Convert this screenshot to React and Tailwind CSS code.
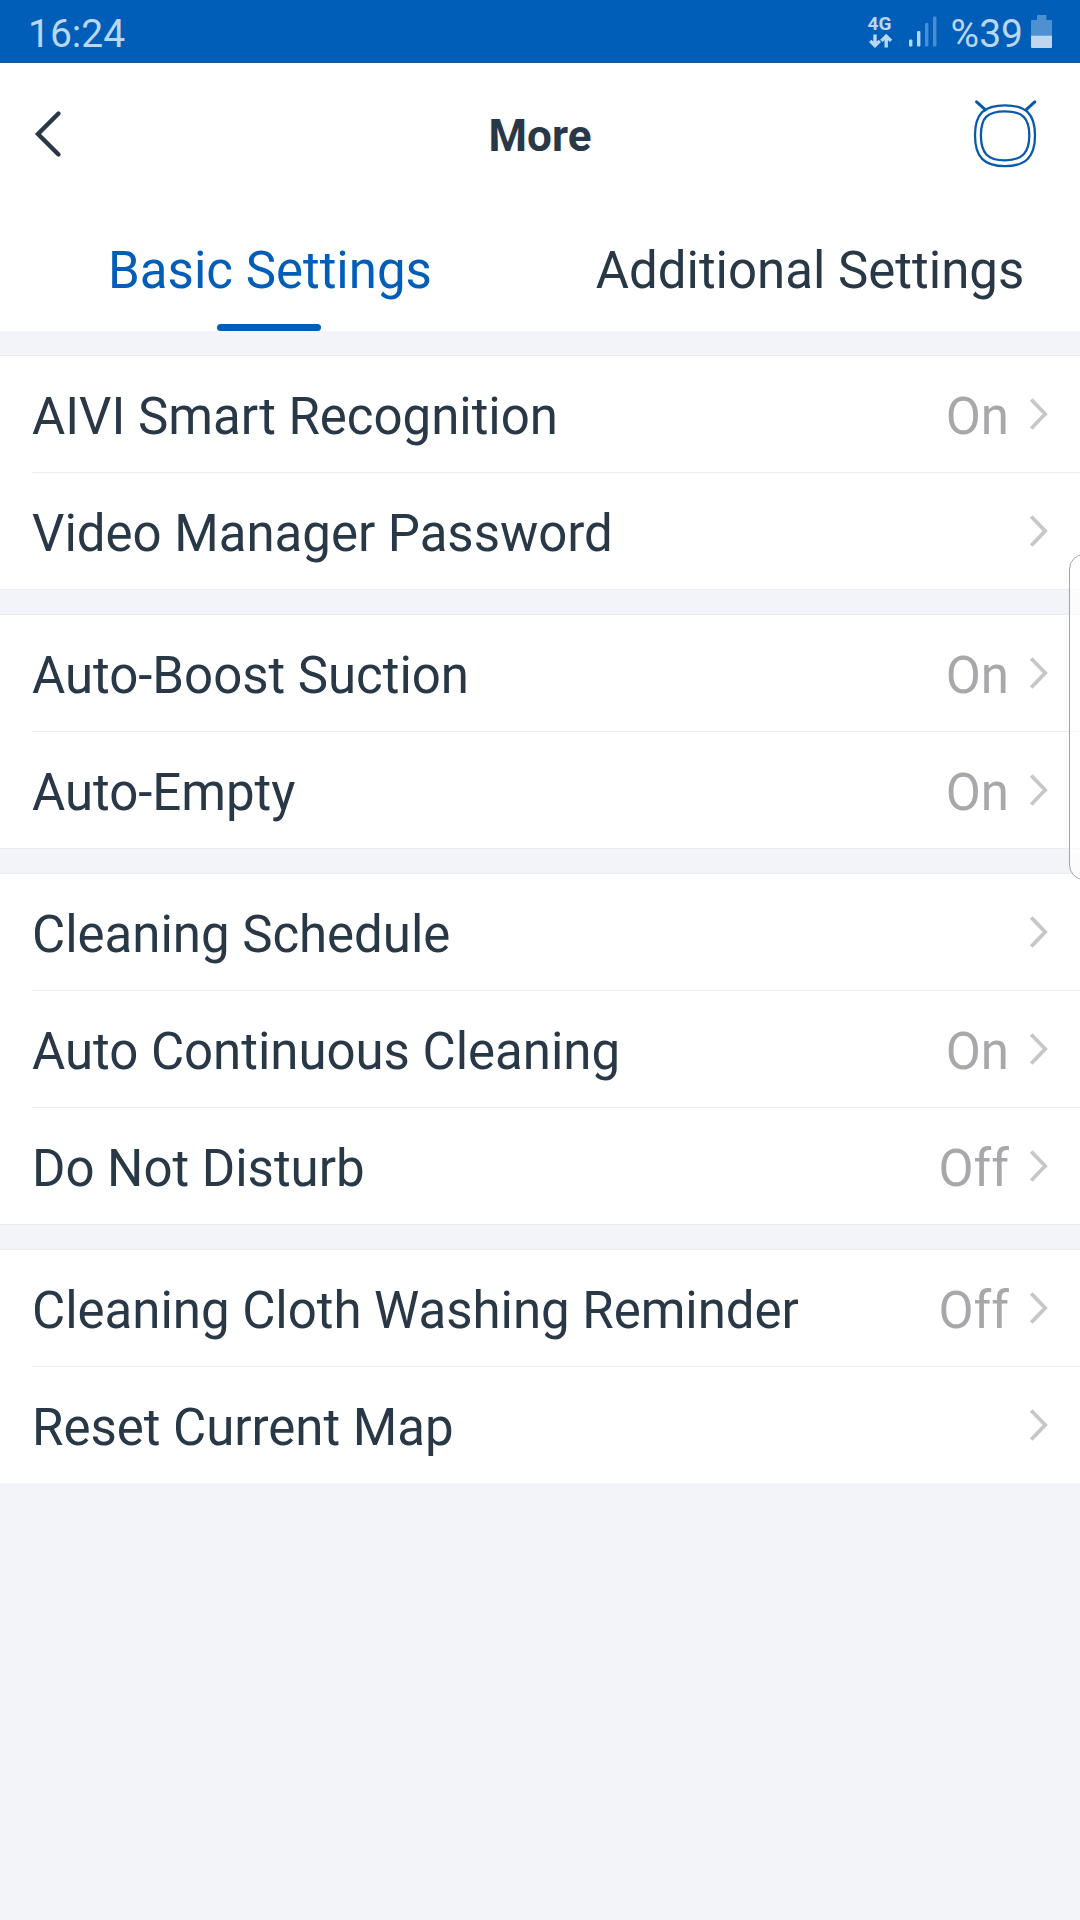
const SECTIONS = [
  [
    { label: 'AIVI Smart Recognition', value: 'On' },
    { label: 'Video Manager Password' },
  ],
  [
    { label: 'Auto-Boost Suction', value: 'On' },
    { label: 'Auto-Empty', value: 'On' },
  ],
  [
    { label: 'Cleaning Schedule' },
    { label: 'Auto Continuous Cleaning', value: 'On' },
    { label: 'Do Not Disturb', value: 'Off' },
  ],
  [
    { label: 'Cleaning Cloth Washing Reminder', value: 'Off' },
    { label: 'Reset Current Map' },
  ],
];

function DataArrows() {
  return (
    <svg width="24" height="16" viewBox="0 0 24 16" fill="none" stroke="#b9d6f2" strokeWidth="3.4">
      <path d="M7 1.5V13M2.2 7.9L7 12.7l4.8-4.8" />
      <path d="M18.2 14.5V3M13.4 7.9l4.800-4.800L23 7.900" />
    </svg>
  );
}

function Signal() {
  return (
    <svg width="28" height="31" viewBox="0 0 28 31">
      <rect x="0" y="23.5" width="3.4" height="7" rx="1" fill="#b9d6f2" />
      <rect x="8" y="15" width="3.4" height="15.5" rx="1" fill="#b9d6f2" />
      <rect x="16" y="7" width="3.4" height="23.5" rx="1" fill="#4a8ed0" />
      <rect x="24" y="0.5" width="3.4" height="30" rx="1" fill="#4a8ed0" />
    </svg>
  );
}

function Battery() {
  return (
    <svg width="21" height="33" viewBox="0 0 21 33">
      <path d="M6 0h9.4v5H20a1 1 0 0 1 1 1v15H0V6a1 1 0 0 1 1-1h5z" fill="#4f90d0" />
      <path d="M0 20.8h21V32a1 1 0 0 1-1 1H1a1 1 0 0 1-1-1z" fill="#bfd6ee" />
    </svg>
  );
}

function StatusBar() {
  return (
    <div className="flex h-[63px] items-center justify-between border-b border-[#1c5590] bg-[#005eb8] pt-1.5 pr-7 pl-7 text-[39px] leading-none text-[#b9d6f2]">
      <span>16:24</span>
      <div className="flex items-center">
        <div className="-mt-[5px] mr-[15px] flex h-[34px] w-[26px] flex-col items-start justify-between">
          <span className="text-[19px] leading-[18px] font-bold">4G</span>
          <DataArrows />
        </div>
        <div className="-mt-1.5 mr-3.5">
          <Signal />
        </div>
        <span className="mr-2">%39</span>
        <div className="-mt-1.5">
          <Battery />
        </div>
      </div>
    </div>
  );
}

function RobotIcon() {
  return (
    <svg width="66" height="70" viewBox="0 0 66 70" fill="none" stroke="#0a5aac" strokeWidth="2.3" strokeLinecap="round">
      <path d="M33 5.3C54 5.3 63 14 63 35.3S54 66.2 33 66.2S3 57 3 35.3S12 5.3 33 5.3z" />
      <path d="M33 11.3C50.5 11.3 57.3 18 57.3 35.3S50.5 60.3 33 60.3S8.900 53 8.900 35.300S15.500 11.300 33 11.300z" />
      <path strokeWidth="3" d="M4.600 1.800L13.500 9.800M62.800 1.800L54 9.800" />
    </svg>
  );
}

function Header() {
  return (
    <header className="grid h-[145px] grid-cols-3 items-center pr-[42px] pl-[34px]">
      <svg width="28" height="48" viewBox="0 0 28 48" fill="none" stroke="#283847" strokeWidth="4.4" className="-mt-1" strokeLinecap="round">
        <path d="M24.500 3.500L4 24l20.500 20.500" />
      </svg>
      <h1 className="pl-2 text-center text-[44px] leading-none font-bold">More</h1>
      <div className="-mt-0.5 justify-self-end">
        <RobotIcon />
      </div>
    </header>
  );
}

function Tabs() {
  return (
    <nav className="grid h-[123px] grid-cols-2 text-[51px] leading-none">
      <div className="flex flex-col items-center justify-between pt-[37px] text-[#005eb8]">
        <span>Basic Settings</span>
        <span className="mr-0.5 h-[7px] w-[104px] rounded-full bg-[#005eb8]" />
      </div>
      <div className="flex flex-col items-center pt-[37px]">
        <span>Additional Settings</span>
      </div>
    </nav>
  );
}

function Row({ label, value, first }) {
  return (
    <div className="pl-8">
      <div
        className={
          first
            ? 'flex h-[116px] items-center justify-between pr-8'
            : 'flex h-[117px] items-center justify-between border-t border-[#ebecee] pr-8'
        }
      >
        <span className="pt-[5px] tracking-[-0.03px]">{label}</span>
        <div className="flex items-center gap-5">
          <span className="pt-[5px] text-[#a7a8ab]">{value}</span>
          <svg width="19" height="32" viewBox="0 0 19 32" fill="none" stroke="#c7c7c8" strokeWidth="3.8">
            <path d="M2.200 1.500L16.200 16L2.200 30.500" />
          </svg>
        </div>
      </div>
    </div>
  );
}

export default function App() {
  return (
    <div className="relative h-[1920px] w-[1080px] overflow-hidden bg-[#f3f4f9] font-[Roboto,sans-serif] whitespace-nowrap text-[#283847]">
      <StatusBar />
      <div className="bg-white">
        <Header />
        <Tabs />
      </div>
      <main className="flex flex-col gap-6 pt-6 text-[51px] leading-none">
        {SECTIONS.map((rows, i) => (
          <section
            key={rows[0].label}
            className={
              i === SECTIONS.length - 1
                ? 'border-t border-[#ebecee] bg-white'
                : 'border-y border-[#ebecee] bg-white'
            }
          >
            {rows.map((row, j) => (
              <Row key={row.label} {...row} first={j === 0} />
            ))}
          </section>
        ))}
      </main>
      <div className="absolute top-[554px] -right-5 h-[326px] w-[31px] rounded-[15px] border border-[#a3a3a3] bg-white/70" />
    </div>
  );
}
